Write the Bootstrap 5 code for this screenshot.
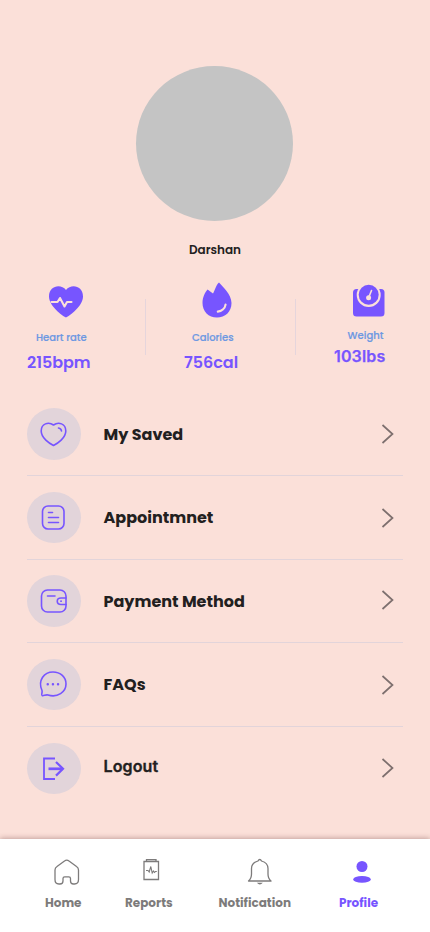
<!DOCTYPE html>
<html lang="en">
<head>
<meta charset="utf-8">
<meta name="viewport" content="width=device-width, initial-scale=1">
<title>Profile</title>
<link href="https://cdn.jsdelivr.net/npm/bootstrap@5.3.0/dist/css/bootstrap.min.css" rel="stylesheet">
<style>
  :root { --violet: #7755ff; --tint: #e2d4da; --ink: #222020; --mute: #7d7b7b; }
  body { background: #fbe0d9; color: var(--ink); font-family: Poppins, Inter, "Noto Sans", sans-serif; overflow: hidden; }
  svg { display: block; flex: none; overflow: visible; }
  .screen { width: 430px; height: 932px; }
  .avatar { width: 157px; height: 155px; margin: 66px 0 0 136px; border-radius: 50%; background: #c4c4c4; }
  .username { margin: 20px 0 0; font-size: 12px; line-height: 18px; font-weight: 600; letter-spacing: -.03px; }
  .stats { height: 110px; margin-top: 23px; }
  .t { display: block; white-space: nowrap; }
  .stat-name { font-size: 10px; line-height: 14px; font-weight: 500; color: #6d98e2; -webkit-text-stroke: .2px #6d98e2; }
  .stat-value { font-size: 16px; line-height: 22px; font-weight: 600; color: var(--violet); margin-top: 7px; letter-spacing: -.03px; }
  .rule { width: 1px; height: 56px; margin-top: 17px; background: #e5d5dc; }
  .heart { width: 145px; padding-left: 27px; }
  .heart svg { margin: 4px 0 0 21px; }
  .heart .stat-name { margin: 12px 0 0 9px; }
  .calories { width: 149px; padding-left: 38px; }
  .calories svg { margin: 0 0 0 18px; }
  .calories .stat-name { margin: 13px 0 0 8px; }
  .weight { width: 134px; padding-left: 38px; }
  .weight svg { margin: 2px 0 0 19px; }
  .weight .stat-name { margin: 12px 0 0 13.500px; letter-spacing: .05px; }
  .weight .stat-value { margin-top: 2px; font-family: Inter, sans-serif; letter-spacing: .15px; -webkit-text-stroke: .25px var(--violet); }
  .menu { width: 376px; margin: 1px 0 0 27px; }
  .menu-row { height: 83.4px; border-bottom: 1.3px solid #e2d4da; }
  .menu-row:last-child { border-bottom: 0; }
  .disc { width: 54px; height: 51.500px; border-radius: 50%; background: var(--tint); color: var(--violet); }
  .menu-label { margin-left: 22.500px; font-size: 16px; line-height: 24px; font-weight: 700; padding-top: 1.500px; }
  .menu-label-out { font-family: Inter, sans-serif; font-weight: 600; padding-top: 0; margin-bottom: 5px; letter-spacing: .12px; -webkit-text-stroke: .35px var(--ink); }
  .chev { margin-right: 9px; color: #7d6f6e; }
  .chev-up { margin-bottom: 2px; }
  .chev-low { margin-top: 1px; }
  .tabs { height: 93px; background: #fff; box-shadow: 0 -1px 5px rgba(80,30,30,.32); color: var(--mute); }
  .tab { color: inherit; text-decoration: none; font-size: 12px; line-height: 18px; font-weight: 700; }
  .tab-ico { height: 28px; margin-top: 20px; margin-bottom: 7px; }
  .tab-on { color: var(--violet); }
  .tab-home { margin-left: 45px; width: 80px; }
  .tab-home svg { margin-left: 9px; }
  .tab-reports { width: 93.500px; }
  .tab-reports svg { margin-left: 18px; }
  .tab-bell { width: 120.500px; }
  .tab-bell svg { margin-left: 28.500px; }
  .tab-on svg { margin-left: 14px; }
</style>
<script src="https://cdn.jsdelivr.net/npm/bootstrap@5.3.0/dist/js/bootstrap.bundle.min.js"></script>
</head>
<body>
<div class="screen d-flex flex-column">
  <header>
    <div class="avatar"></div>
    <h1 class="username text-center">Darshan</h1>
  </header>

  <section class="stats d-flex">
    <div class="heart">
      <svg width="36" height="33" viewBox="0 0 36 33"><path d="M18 31.500C14 29.500 1 20 1 10.500C1 -.5 13-2.500 18 4C23-2.500 35-.5 35 10.500C35 20 22 29.500 18 31.500Z" fill="#7755ff"/><path d="M3.500 16h6l2.500-4 4.500 8.500 2.500-4.500h4.500" fill="none" stroke="#fbe0d9" stroke-width="2.100" stroke-linecap="round" stroke-linejoin="round"/></svg>
      <span class="t stat-name">Heart rate</span>
      <span class="t stat-value">215bpm</span>
    </div>
    <div class="rule"></div>
    <div class="calories">
      <svg width="30" height="36" viewBox="0 0 30 36"><path d="M17 .5C20 4 29.500 12 29.500 21C29.500 30 23 35.500 15 35.500C6.500 35.500 .5 29.500 .5 21C.5 15 3 10.500 5.500 7.500C7 8.500 8.500 9.500 11 11.500C13 8 14 3 17 .5Z" fill="#7755ff"/><path d="M15.800 29.600C19.500 29.200 23 26.500 23.600 22.500" fill="none" stroke="#fbe0d9" stroke-width="2.100" stroke-linecap="round"/></svg>
      <span class="t stat-name">Calories</span>
      <span class="t stat-value">756cal</span>
    </div>
    <div class="rule"></div>
    <div class="weight">
      <svg width="32" height="33" viewBox="0 0 32 33"><rect y="5" width="31.500" height="27.500" rx="3.500" fill="#7755ff"/><circle cx="15.700" cy="11" r="12" fill="#fbe0d9"/><circle cx="15.700" cy="10.700" r="10" fill="#7755ff"/><path d="M15.700 13.500L18.500 6.500" stroke="#fbe0d9" stroke-width="1.600" stroke-linecap="round"/><circle cx="15.600" cy="13.800" r="2.500" fill="#fbe0d9"/></svg>
      <span class="t stat-name">Weight</span>
      <span class="t stat-value">103lbs</span>
    </div>
  </section>

  <nav class="menu">
    <div class="menu-row d-flex align-items-center">
      <div class="disc d-flex align-items-center justify-content-center"><svg width="28" height="26" viewBox="0 0 28 26" fill="none" stroke="currentColor" stroke-width="1.600" stroke-linecap="round" stroke-linejoin="round"><path d="M13.500 24.500C9.500 22.500 1.200 17 1.200 10C1.200 2.500 8.500 .5 13.500 4C18.500 .5 25.800 2.500 25.800 10C25.800 17 17.500 22.500 13.500 24.500Z"/><path d="M18.500 7C20.300 7.300 21.300 8.500 21.500 10"/></svg></div>
      <span class="t menu-label">My Saved</span>
      <svg class="chev ms-auto" width="13" height="20" viewBox="0 0 13 20" fill="none" stroke="currentColor" stroke-width="1.700"><path d="M1.500 1L11.500 10L1.500 19"/></svg>
    </div>
    <div class="menu-row d-flex align-items-center">
      <div class="disc d-flex align-items-center justify-content-center"><svg width="24" height="26" viewBox="0 0 24 26" fill="none" stroke="currentColor" stroke-width="1.600" stroke-linecap="round"><rect x="0.500" y="1" width="21.500" height="23" rx="5.500"/><path d="M6.500 7.500h4M6.500 12.500h10M6.500 17.500h10"/></svg></div>
      <span class="t menu-label">Appointmnet</span>
      <svg class="chev ms-auto" width="13" height="20" viewBox="0 0 13 20" fill="none" stroke="currentColor" stroke-width="1.700"><path d="M1.500 1L11.500 10L1.500 19"/></svg>
    </div>
    <div class="menu-row d-flex align-items-center">
      <div class="disc d-flex align-items-center justify-content-center"><svg width="28" height="24" viewBox="0 0 28 24" fill="none" stroke="currentColor" stroke-width="1.600" stroke-linecap="round"><rect x="1.500" y="1" width="24.500" height="22" rx="6"/><path d="M7.500 7h7.500M26 9H21C16 9 16 15.500 21 15.500h5"/><path d="M21 12.200h.1" stroke-width="1.800"/></svg></div>
      <span class="t menu-label">Payment Method</span>
      <svg class="chev chev-up ms-auto" width="13" height="20" viewBox="0 0 13 20" fill="none" stroke="currentColor" stroke-width="1.700"><path d="M1.500 1L11.500 10L1.500 19"/></svg>
    </div>
    <div class="menu-row d-flex align-items-center">
      <div class="disc d-flex align-items-center justify-content-center"><svg width="30" height="27" viewBox="0 0 30 27" fill="none" stroke="currentColor" stroke-width="1.600" stroke-linejoin="round"><path d="M3 19.500C-1.500 9.500 5 1 14 1C21.500 1 27 6.200 27 13C27 21 18.500 27 9 24C6.500 23.500 5 25 3.200 24.700C1.700 24.300 3.700 21.500 3 19.500Z"/><path d="M8.700 13.300h.1M13.900 13.300h.1M19 13.300h.1" stroke-width="2.400" stroke-linecap="round"/></svg></div>
      <span class="t menu-label">FAQs</span>
      <svg class="chev chev-low ms-auto" width="13" height="20" viewBox="0 0 13 20" fill="none" stroke="currentColor" stroke-width="1.700"><path d="M1.500 1L11.500 10L1.500 19"/></svg>
    </div>
    <div class="menu-row d-flex align-items-center">
      <div class="disc d-flex align-items-center justify-content-center"><svg width="22" height="23" viewBox="0 0 22 23" fill="none" stroke="currentColor"><path d="M12 1.500H1V22H12" stroke-width="1.800"/><path d="M5.500 11.800H20" stroke-width="2.700"/><path d="M13 5L20 11.800L13 18.600" stroke-width="2.200"/></svg></div>
      <span class="t menu-label menu-label-out">Logout</span>
      <svg class="chev ms-auto" width="13" height="20" viewBox="0 0 13 20" fill="none" stroke="currentColor" stroke-width="1.700"><path d="M1.500 1L11.500 10L1.500 19"/></svg>
    </div>
  </nav>

  <footer class="tabs d-flex mt-auto">
    <a class="tab tab-home"><svg class="tab-ico" width="26" height="28" viewBox="0 0 26 28" fill="none" stroke="currentColor" stroke-width="1.300"><path d="M9 19.500V22C9 24 8 25 6 25H5C2 25 1 23.500 1 20.500V11C1 9.500 1.500 8.500 3 7.500L10.500 2C12 .800 13.500 .800 15 2L22.500 7.500C24 8.500 24.500 9.500 24.500 11V20.500C24.500 23.500 23.500 25 20.500 25H19.500C17.500 25 16.500 24 16.500 22V19.500C16.500 18.300 16 17.800 14.800 17.800H10.700C9.500 17.800 9 18.300 9 19.500Z"/></svg><span class="t">Home</span></a>
    <a class="tab tab-reports"><svg class="tab-ico" width="17" height="28" viewBox="0 0 17 28" fill="none" stroke="currentColor" stroke-width="1.300"><path d="M1 2.500H15.500V20.500H1ZM3.500 2.500V.7H13V2.500"/><path d="M3 11.500h2l1.200 1.500L7.800 7.500l1.400 6.500 1.200-2 1 1.500 1-1h1.400" stroke-width="1.100"/></svg><span class="t">Reports</span></a>
    <a class="tab tab-bell"><svg class="tab-ico" width="26" height="28" viewBox="0 0 26 28" fill="none" stroke="currentColor" stroke-width="1.300"><path d="M1.500 22C4 20 4.500 18.500 4.500 15V9.500C4.500 5.500 7.500 3 11 2C12 0 13.500 0 14.500 2C18 3 21 5.500 21 9.500V15C21 18.500 21.500 20 24 22Z" stroke-linejoin="round"/><path d="M9.800 23.800H15.800Q12.800 27.300 9.800 23.800Z" fill="currentColor" stroke="none"/></svg><span class="t">Notification</span></a>
    <a class="tab tab-on"><svg class="tab-ico" width="18" height="28" viewBox="0 0 18 28" fill="currentColor"><circle cx="9" cy="7.500" r="5.500"/><ellipse cx="9" cy="20.400" rx="8.800" ry="3.400"/></svg><span class="t">Profile</span></a>
  </footer>
</div>
</body>
</html>
